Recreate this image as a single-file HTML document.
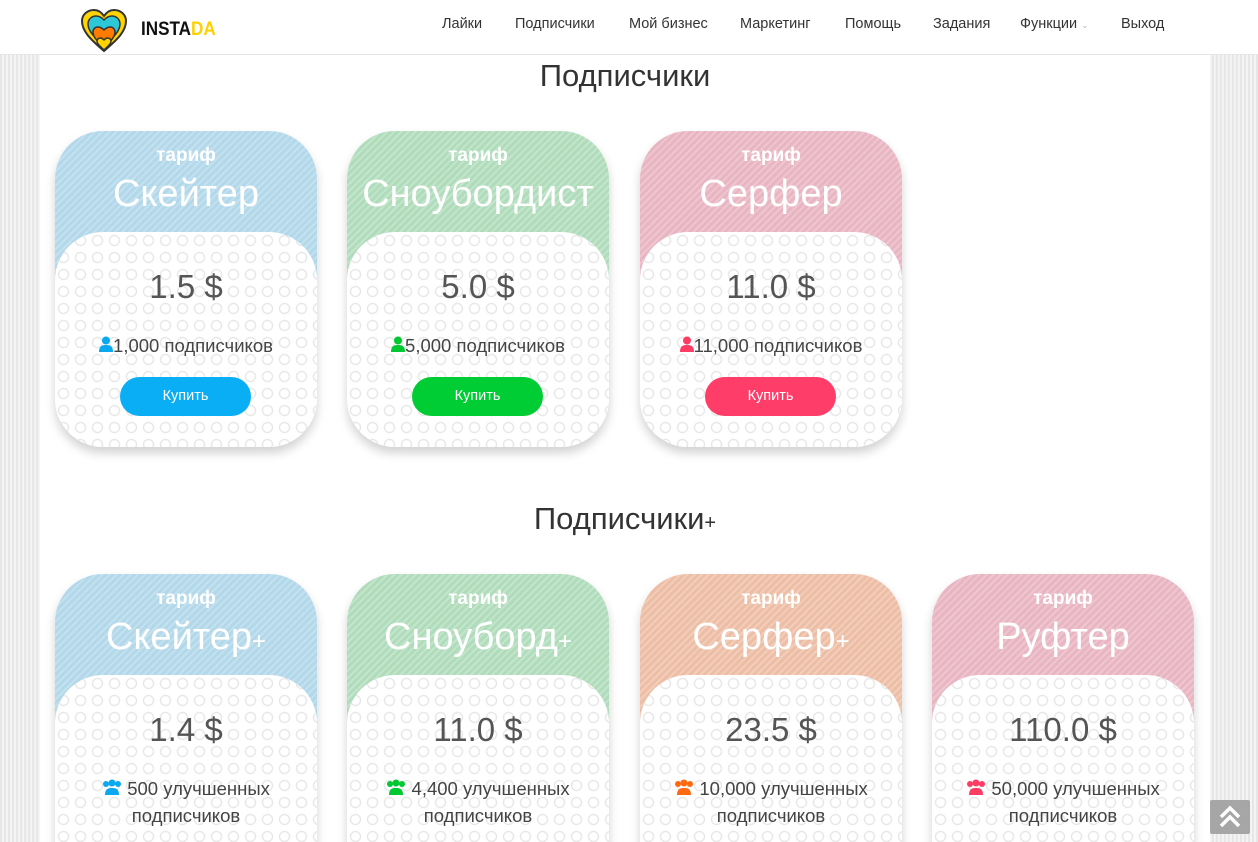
<!DOCTYPE html>
<html><head><meta charset="utf-8">
<style>
*{margin:0;padding:0;box-sizing:border-box}
html,body{width:1258px;height:842px;overflow:hidden}
body{font-family:"Liberation Sans","DejaVu Sans",sans-serif;background:repeating-linear-gradient(90deg,#e6e6e6 0 2px,#f4f4f4 2px 4px);position:relative}
.main{position:absolute;left:40px;top:0;width:1170px;height:842px;background:#fff}
.nav{position:absolute;left:0;top:0;width:1258px;height:55px;background:#fff;border-bottom:1px solid #e5e5e5;z-index:5}
.logo{position:absolute;left:80px;top:9px}
.brand{position:absolute;left:141px;top:19px;font-weight:bold;font-size:19px;font-family:"Liberation Sans",sans-serif;transform:scaleX(.9);transform-origin:left;color:#111}
.brand b{color:#ffd000}
.menu{position:absolute;top:16px;font-size:14.5px;color:#333}
.menu span{position:absolute;white-space:nowrap}
h2{position:absolute;width:1170px;left:40px;text-align:center;font-weight:normal;font-size:31px;color:#333}
.card{position:absolute;width:262px;height:316px;border-radius:48px;overflow:hidden;box-shadow:0 6px 10px rgba(0,0,0,.18)}
.head{position:absolute;left:0;top:0;width:100%;height:150px;color:#fff;text-align:center}
.head .t{position:absolute;top:14px;width:100%;font-size:19px;font-weight:bold}
.head .n{position:absolute;top:42px;width:100%;font-size:38px}
.body{position:absolute;left:0;top:101px;width:100%;height:215px;border-radius:48px 48px 0 0;background-color:#fff;background-image:radial-gradient(circle,transparent 4px,#e8e8e8 4.5px,#e8e8e8 5.5px,transparent 6px);background-size:17px 17px;text-align:center;color:#555}
.price{position:absolute;top:36px;width:100%;font-size:33px;color:#555}
.sub{position:absolute;top:100px;width:100%;font-size:18.5px;color:#444;line-height:27px}
.btn{position:absolute;left:65px;top:145px;width:131px;height:39px;border-radius:20px;color:#fff;font-size:14.5px;line-height:39px}
.top{position:absolute;left:1210px;top:800px;width:40px;height:34px;background:#a6a6a6;border-radius:2px}
.hb{background:repeating-linear-gradient(135deg,#b3d8ea 0 3px,#c4e1ef 3px 5px)}
.hg{background:repeating-linear-gradient(135deg,#b0dcbb 0 3px,#c2e5cb 3px 5px)}
.hp{background:repeating-linear-gradient(135deg,#e8b6c3 0 3px,#efc6d0 3px 5px)}
.ho{background:repeating-linear-gradient(135deg,#edbea6 0 3px,#f2cdb9 3px 5px)}
</style></head><body>
<div class="main"></div>
<div class="nav">
 <svg class="logo" width="48" height="44" viewBox="0 0 48 44">
  <path d="M24 42 C10 30 2 22 2 12 C2 5 8 1 14 1 C19 1 22 4 24 7 C26 4 29 1 34 1 C40 1 46 5 46 12 C46 22 38 30 24 42Z" fill="#ffd400" stroke="#333" stroke-width="2"/>
  <path d="M24 36 C14 28 8 22 8 15 C8 10 12 7 16 7 C20 7 22 9 24 11 C26 9 28 7 32 7 C36 7 40 10 40 15 C40 22 34 28 24 36Z" fill="#2cc8d8" stroke="#333" stroke-width="1.5"/>
  <path d="M24 38 C17 32 13 28 13 23 C13 20 15 18 18 18 C21 18 23 20 24 21 C25 20 27 18 30 18 C33 18 35 20 35 23 C35 28 31 32 24 38Z" fill="#ff7a00" stroke="#333" stroke-width="1.5"/>
  <path d="M24 41 C20 37 17 35 17 32 C17 30 19 29 20.5 29 C22 29 23 30 24 31 C25 30 26 29 27.5 29 C29 29 31 30 31 32 C31 35 28 37 24 41Z" fill="#ffd400" stroke="#333" stroke-width="1.5"/>
 </svg>
 <div class="brand">INSTA<b>DA</b></div>
 <div class="menu">
  <span style="left:442px">Лайки</span>
  <span style="left:515px">Подписчики</span>
  <span style="left:629px">Мой бизнес</span>
  <span style="left:740px">Маркетинг</span>
  <span style="left:845px">Помощь</span>
  <span style="left:933px">Задания</span>
  <span style="left:1020px">Функции <small style="color:#bbb;font-size:9px">⌄</small></span>
  <span style="left:1121px">Выход</span>
 </div>
</div>

<h2 style="top:58px">Подписчики</h2>
<h2 style="top:501px">Подписчики<small style="font-size:20px">+</small></h2>

<div class="card" style="left:55px;top:131px"><div class="head hb"><div class="t">тариф</div><div class="n">Скейтер</div></div>
<div class="body"><div class="price">1.5 $</div><div class="sub"><svg width="14" height="16" viewBox="0 0 14 16"><circle cx="7" cy="4.5" r="4" fill="#0aa8f0"/><path d="M0 16 C0 10 3 9 7 9 C11 9 14 10 14 16Z" fill="#0aa8f0"/></svg>1,000 подписчиков</div><div class="btn" style="background:#0aaef5">Купить</div></div></div>

<div class="card" style="left:347px;top:131px"><div class="head hg"><div class="t">тариф</div><div class="n">Сноубордист</div></div>
<div class="body"><div class="price">5.0 $</div><div class="sub"><svg width="14" height="16" viewBox="0 0 14 16"><circle cx="7" cy="4.5" r="4" fill="#00c832"/><path d="M0 16 C0 10 3 9 7 9 C11 9 14 10 14 16Z" fill="#00c832"/></svg>5,000 подписчиков</div><div class="btn" style="background:#00cc33">Купить</div></div></div>

<div class="card" style="left:640px;top:131px"><div class="head hp"><div class="t">тариф</div><div class="n">Серфер</div></div>
<div class="body"><div class="price">11.0 $</div><div class="sub"><svg width="14" height="16" viewBox="0 0 14 16"><circle cx="7" cy="4.5" r="4" fill="#ff3c64"/><path d="M0 16 C0 10 3 9 7 9 C11 9 14 10 14 16Z" fill="#ff3c64"/></svg>11,000 подписчиков</div><div class="btn" style="background:#ff3d68">Купить</div></div></div>

<div class="card" style="left:55px;top:574px"><div class="head hb"><div class="t">тариф</div><div class="n">Скейтер<small style="font-size:24px">+</small></div></div>
<div class="body"><div class="price">1.4 $</div><div class="sub"><svg width="20" height="16" viewBox="0 0 20 16"><circle cx="4" cy="5" r="3" fill="#0aa8f0"/><circle cx="16" cy="5" r="3" fill="#0aa8f0"/><circle cx="10" cy="4" r="3.5" fill="#0aa8f0"/><path d="M3 16 C3 10 6 9 10 9 C14 9 17 10 17 16Z" fill="#0aa8f0"/></svg> 500 улучшенных<br>подписчиков</div></div></div>

<div class="card" style="left:347px;top:574px"><div class="head hg"><div class="t">тариф</div><div class="n">Сноуборд<small style="font-size:24px">+</small></div></div>
<div class="body"><div class="price">11.0 $</div><div class="sub"><svg width="20" height="16" viewBox="0 0 20 16"><circle cx="4" cy="5" r="3" fill="#00c832"/><circle cx="16" cy="5" r="3" fill="#00c832"/><circle cx="10" cy="4" r="3.5" fill="#00c832"/><path d="M3 16 C3 10 6 9 10 9 C14 9 17 10 17 16Z" fill="#00c832"/></svg> 4,400 улучшенных<br>подписчиков</div></div></div>

<div class="card" style="left:640px;top:574px"><div class="head ho"><div class="t">тариф</div><div class="n">Серфер<small style="font-size:24px">+</small></div></div>
<div class="body"><div class="price">23.5 $</div><div class="sub"><svg width="20" height="16" viewBox="0 0 20 16"><circle cx="4" cy="5" r="3" fill="#ff6a10"/><circle cx="16" cy="5" r="3" fill="#ff6a10"/><circle cx="10" cy="4" r="3.5" fill="#ff6a10"/><path d="M3 16 C3 10 6 9 10 9 C14 9 17 10 17 16Z" fill="#ff6a10"/></svg> 10,000 улучшенных<br>подписчиков</div></div></div>

<div class="card" style="left:932px;top:574px"><div class="head hp"><div class="t">тариф</div><div class="n">Руфтер</div></div>
<div class="body"><div class="price">110.0 $</div><div class="sub"><svg width="20" height="16" viewBox="0 0 20 16"><circle cx="4" cy="5" r="3" fill="#ff3c64"/><circle cx="16" cy="5" r="3" fill="#ff3c64"/><circle cx="10" cy="4" r="3.5" fill="#ff3c64"/><path d="M3 16 C3 10 6 9 10 9 C14 9 17 10 17 16Z" fill="#ff3c64"/></svg> 50,000 улучшенных<br>подписчиков</div></div></div>

<div class="top"><svg width="40" height="34" viewBox="0 0 40 34"><path d="M11 17 L20 8 L29 17 M11 26 L20 17 L29 26" fill="none" stroke="#fff" stroke-width="3.5"/></svg></div>
</body></html>
